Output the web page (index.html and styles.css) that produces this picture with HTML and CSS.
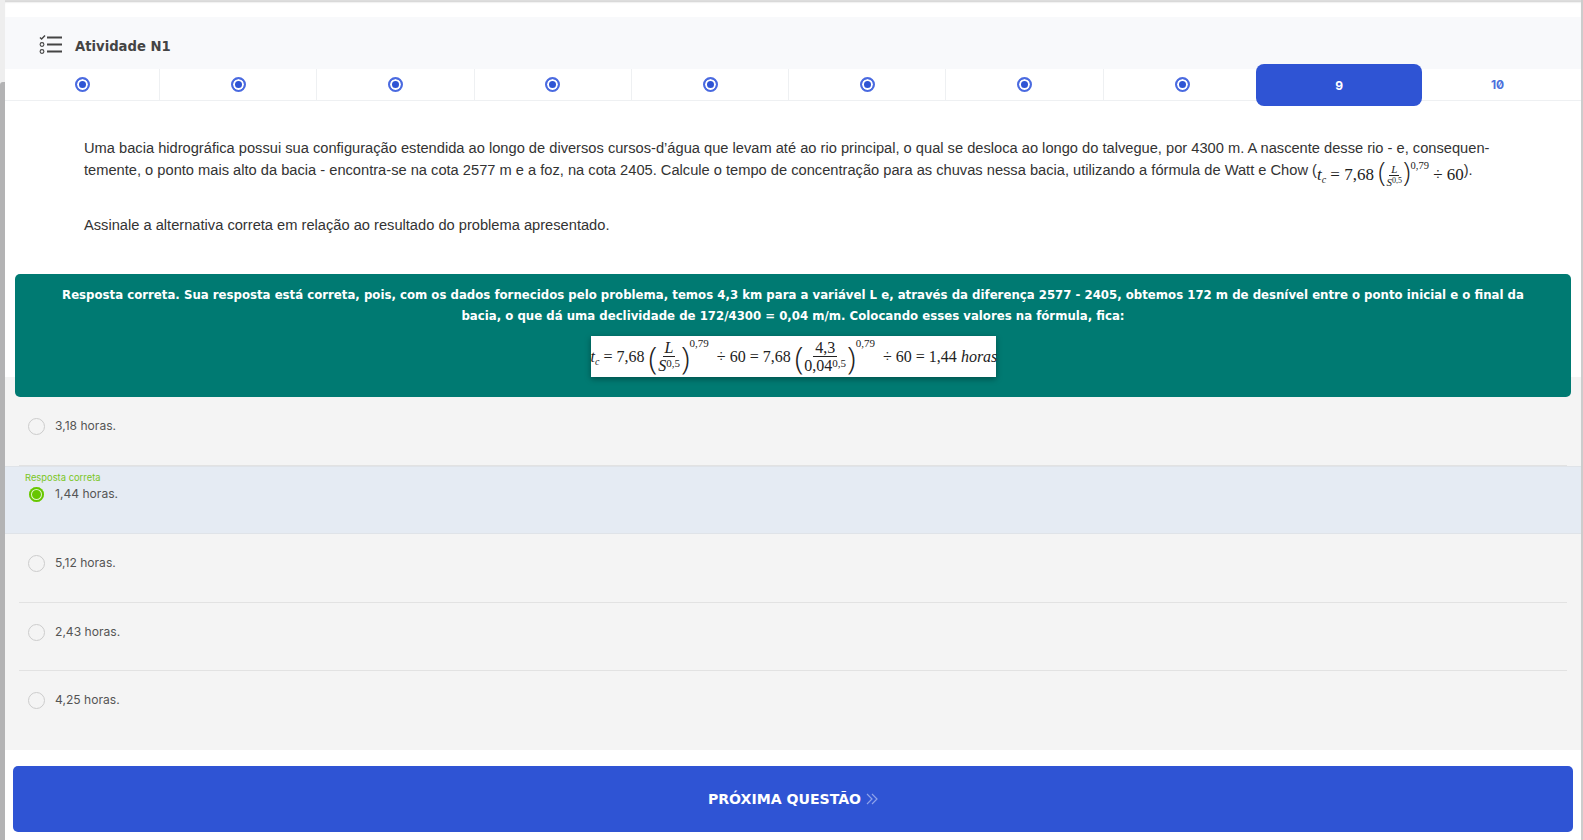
FILE: index.html
```html
<!DOCTYPE html>
<html lang="pt">
<head>
<meta charset="utf-8">
<title>Atividade N1</title>
<link rel="stylesheet" href="styles.css">
</head>
<body>
<div class="strip"><div class="strip-thumb"></div></div>
<main class="page">
  <div class="topbar"></div>
  <header class="head">
    <svg class="head-icon" width="24" height="20" viewBox="0 0 24 20" fill="none" stroke="#444" aria-hidden="true">
      <path d="M1 3.5l1.6 1.6L6 1.5" stroke-width="1.4"/>
      <path d="M8 3.5h15M8 10.5h15M8 17.5h15" stroke-width="1.8"/>
      <circle cx="3" cy="10.5" r="1.9" stroke-width="1.1"/>
      <circle cx="3" cy="17.5" r="1.9" stroke-width="1.1"/>
    </svg>
    <h1 class="head-title">Atividade N1</h1>
  </header>
  <nav class="steps">
    <div class="step"><span class="dot"></span></div>
    <div class="step"><span class="dot"></span></div>
    <div class="step"><span class="dot"></span></div>
    <div class="step"><span class="dot"></span></div>
    <div class="step"><span class="dot"></span></div>
    <div class="step"><span class="dot"></span></div>
    <div class="step"><span class="dot"></span></div>
    <div class="step step-last"><span class="dot"></span></div>
    <div class="step step-active">9</div>
    <div class="step step-next">10</div>
  </nav>
  <section class="question">
    <p class="q-text">Uma bacia hidrográfica possui sua configuração estendida ao longo de diversos cursos-d’água que levam até ao rio principal, o qual se desloca ao longo do talvegue, por 4300 m. A nascente desse rio - e, consequen-<br>temente, o ponto mais alto da bacia - encontra-se na cota 2577 m e a foz, na cota 2405. Calcule o tempo de concentração para as chuvas nessa bacia, utilizando a fórmula de Watt e Chow <span class="paren">(</span><span class="math math-sm"><i>t<sub>c</sub></i> = 7,68 <span class="bracket">(</span><span class="frac"><span class="num"><i>L</i></span><span class="den"><i>S</i><sup>0,5</sup></span></span><span class="bracket">)</span><sup class="exp">0,79</sup> ÷ 60</span><span class="paren">).</span></p>
    <p class="q-text q-ask">Assinale a alternativa correta em relação ao resultado do problema apresentado.</p>
  </section>
  <section class="feedback">
    <p class="fb-text">Resposta correta. Sua resposta está correta, pois, com os dados fornecidos pelo problema, temos 4,3 km para a variável L e, através da diferença 2577 - 2405, obtemos 172 m de desnível entre o ponto inicial e o final da bacia, o que dá uma declividade de 172/4300 = 0,04 m/m. Colocando esses valores na fórmula, fica:</p>
    <div class="formula"><i>t<sub>c</sub></i>&nbsp;= 7,68&nbsp;<span class="bracket">(</span><span class="frac"><span class="num"><i>L</i></span><span class="den"><i>S</i><sup>0,5</sup></span></span><span class="bracket">)</span><sup class="exp">0,79</sup>&nbsp;&nbsp;÷ 60 = 7,68&nbsp;<span class="bracket">(</span><span class="frac"><span class="num">4,3</span><span class="den">0,04<sup>0,5</sup></span></span><span class="bracket">)</span><sup class="exp">0,79</sup>&nbsp;&nbsp;÷ 60 = 1,44&nbsp;<i>horas</i></div>
  </section>
  <section class="options">
    <div class="option"><span class="radio"></span><span class="opt-text">3,18 horas.</span></div>
    <div class="option option-right"><span class="opt-tag">Resposta correta</span><span class="radio radio-on"></span><span class="opt-text">1,44 horas.</span></div>
    <div class="option"><span class="radio"></span><span class="opt-text">5,12 horas.</span></div>
    <div class="option"><span class="radio"></span><span class="opt-text">2,43 horas.</span></div>
    <div class="option option-end"><span class="radio"></span><span class="opt-text">4,25 horas.</span></div>
  </section>
  <div class="actions">
    <button class="next" type="button">PRÓXIMA QUESTÃO
      <svg width="12" height="12" viewBox="0 0 12 12" fill="none" stroke="#8fa3ea" stroke-width="1.2" aria-hidden="true"><path d="M1 1l5 5-5 5M6 1l5 5-5 5"/></svg>
    </button>
  </div>
</main>
<div class="strip-right"></div>
</body>
</html>
```
FILE: styles.css
```css
* { box-sizing: border-box; }
html, body { margin: 0; padding: 0; height: 840px; overflow: hidden; }
body { display: flex; background: #fff; font-family: "Liberation Sans", Arial, sans-serif; color: #444; }
.strip { width: 5px; flex: none; background: #eeeeee; padding-top: 82px; }
.strip-thumb { height: 100%; background: #b3b3b4; border-radius: 3px 0 0 0; }
.strip-right { width: 2px; flex: none; background: #cccccc; }
.page { flex: 1; min-width: 0; display: flex; flex-direction: column; }
.topbar { height: 17px; flex: none; background: #fff; border-top: 1px solid #ddd; box-shadow: inset 0 2px 2px -1px #ccc; }
.head { height: 52px; flex: none; background: #f8f9fb; display: flex; align-items: center; gap: 12px; padding: 3px 0 0 34px; }
.head-icon { display: block; margin-top: -1px; }
.head-title { margin: 3px 0 0; font: 700 13.2px "DejaVu Sans", sans-serif; color: #444; }
.steps { height: 32px; flex: none; display: grid; grid-template-columns: 155px repeat(7, 157.3px) 161px 1fr; grid-template-rows: 31px; border-bottom: 1px solid #eef0f2; }
.step { display: flex; align-items: center; justify-content: center; border-right: 1px solid #eef0f2; font: 700 12px "Inter", sans-serif; font-feature-settings: "zero"; }
.step-last { border-right: 0; }
.dot { width: 15px; height: 15px; border: 2px solid #4a6ae0; border-radius: 50%; background: #2f54d4; box-shadow: inset 0 0 0 2px #fff; }
.step-active { background: #2f54d4; color: #fff; border: 0; border-radius: 8px; height: 42px; margin: -5px 0 0 -5px; position: relative; z-index: 1; }
.step-next { color: #4d6fdc; border: 0; padding-right: 8px; }
.question { flex: none; height: 173px; padding: 36px 84px 0 79px; }
.q-text { margin: 0; font-size: 14.67px; line-height: 22px; color: #333; }
.q-ask { margin-top: 31px; }
.paren { font-size: 14.5px; }
.math { font-family: "Liberation Serif", serif; color: #222; }
.math-sm { font-size: 17px; position: relative; top: 5px; }
.math sub, .formula sub { font-size: 10px; vertical-align: -3px; line-height: 0; }
.frac { display: inline-flex; flex-direction: column; align-items: center; vertical-align: middle; line-height: 1; }
.num { padding: 0 2px; border-bottom: 1px solid #222; }
.den { padding: 1px 1px 0; }
.den sup { font-size: 11px; line-height: 0; vertical-align: 4px; }
.math-sm .frac { font-size: 11px; }
.math-sm .den sup { font-size: 8px; vertical-align: 3px; }
.bracket { font-family: "Open Sans", sans-serif; font-size: 1.6em; font-weight: 300; line-height: 0; vertical-align: -2px; }
.exp { font-size: 10.5px; line-height: 0; vertical-align: 11px; }
.feedback { flex: none; margin: 0 10px 0 10px; height: 123px; background: #007a72; border-radius: 5px; padding: 11px 40px 0; color: #fff; position: relative; z-index: 1; display: flex; flex-direction: column; align-items: center; }
.fb-text { margin: 0; font: 700 11.76px/21px "DejaVu Sans", sans-serif; text-align: center; }
.formula { width: 405px; height: 41px; margin-top: 9px; background: #fff; color: #222; font: 16px "Liberation Serif", serif; display: flex; align-items: center; white-space: nowrap; box-shadow: 0 2px 6px rgba(0,0,0,.35); }
.formula .exp { align-self: flex-start; margin-top: 2px; vertical-align: baseline; font-size: 11px; line-height: 1; }
.formula .bracket { font-size: 32px; line-height: 38px; }
.formula .frac { font-size: 16px; }
.options { flex: none; height: 373px; margin-top: -20px; padding-top: 20px; background: #f4f4f4; display: flex; flex-direction: column; }
.option { height: 68.5px; position: relative; border-bottom: 1px solid #e2e2e2; margin: 0 14px; padding: 20px 0 0 9px; display: flex; align-items: flex-start; gap: 10px; }
.option-right { margin: 0; padding: 18px 0 0 23px; background: #e5ebf3; border-bottom: 1px solid #dfe3e8; border-top: 1px solid #dfe3e8; }
.option-end { border-bottom: 0; }
.opt-tag { position: absolute; left: 20px; top: 5px; font: 9.4px "Inter", sans-serif; color: #7ac61e; }
.radio { width: 17px; height: 17px; flex: none; margin-top: 1px; border: 1px solid #ccc; border-radius: 50%; background: #f4f4f4; }
.radio-on { width: 15px; height: 15px; margin: 2px 1px 0; border: 0; background: #66c600; box-shadow: inset 0 0 0 2px #66c600, inset 0 0 0 3px #dff5c5; }
.opt-text { font: 12.1px/18px "Inter", sans-serif; color: #555; }
.actions { flex: 1; padding: 16px 8px 8px 8px; }
.next { display: flex; width: 100%; height: 66px; align-items: center; justify-content: center; gap: 5px; border: 0; border-radius: 5px; background: #2f54d4; color: #fff; font: 700 14.1px "DejaVu Sans", sans-serif; }
```
